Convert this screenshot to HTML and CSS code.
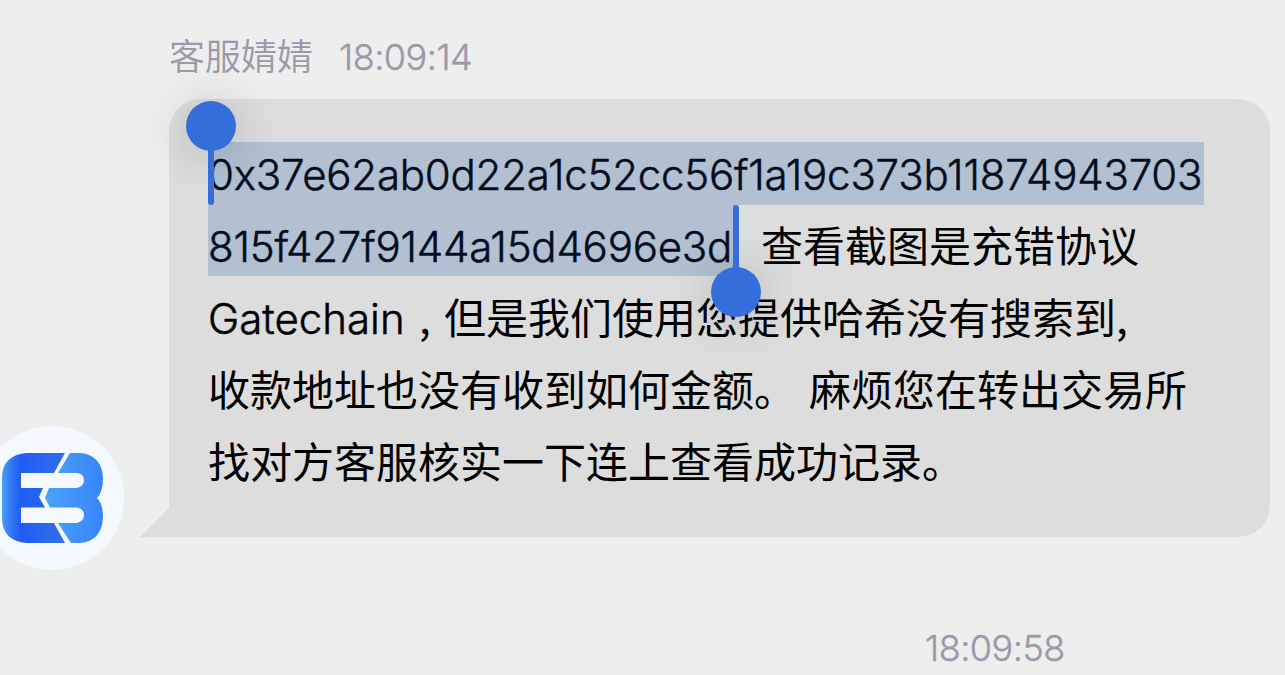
FILE: index.html
```html
<!DOCTYPE html>
<html lang="zh-CN">
  <head>
    <meta charset="utf-8">
    <title>客服婧婧</title>
    <link rel="stylesheet" href="styles.css">
  </head>
  <body>
    <div class="chat">
      <div class="message-header">
        <span class="name">客服婧婧</span>
        <span class="time">18:09:14</span>
      </div>
      <div class="message">
        <svg class="avatar" viewBox="0 426 124 144">
          <defs>
            <linearGradient id="left" x1="0" y1="0" x2="1" y2="0">
              <stop offset="0" stop-color="#4aa0fa"/>
              <stop offset="0.18" stop-color="#2b70f2"/>
              <stop offset="0.3" stop-color="#205cf4"/>
              <stop offset="1" stop-color="#316fe8"/>
            </linearGradient>
            <linearGradient id="right" x1="0" y1="0" x2="1" y2="0">
              <stop offset="0" stop-color="#4ba3f8"/>
              <stop offset="1" stop-color="#3784fa"/>
            </linearGradient>
          </defs>
          <circle cx="52" cy="498" r="72" fill="#f4f9ff"/>
          <path fill="url(#left)" d="M65 453 L54 473 H21 V488 H43 L39 497 L45 507.500 H21 V523 H54 L65 543 H27 Q2 541 2 518 V478 Q2 455 27 453 Z"/>
          <path fill="url(#right)" d="M70 453 H80 Q102 455 103 478 Q103 492 97 498 Q103 504 103 517 Q102 541 80 543 H71 L58 523 H77 Q84 521 84 515 Q84 509 77 507.500 H50 L45 498 L49 488 H77 Q84 486 84 480 Q84 474 77 473 H58 Z"/>
        </svg>
        <svg class="tail" viewBox="0 0 29 29">
          <path d="M29 0 L0 29 H29 Z" fill="#dddddd"/>
        </svg>
        <div class="bubble">
          <div class="line line-first"><span class="selected hash-start">0x37e62ab0d22a1c52cc56f1a19c373b11874943703</span></div>
          <div class="line line-second"><span class="selected hash-end">815f427f9144a15d4696e3d</span><span class="after-hash">查看截图是充错协议</span></div>
          <div class="line"><span class="latin">Gatechain</span><span class="comma">,</span><span class="cjk">但是我们使用您提供哈希没有搜索到,</span></div>
          <div class="line"><span>收款地址也没有收到如何金额。</span><span class="gap">麻烦您在转出交易所</span></div>
          <div class="line"><span>找对方客服核实一下连上查看成功记录。</span></div>
          <div class="handle handle-start"></div>
          <div class="handle handle-end"></div>
        </div>
      </div>
      <div class="next-time">18:09:58</div>
    </div>
  </body>
</html>
```
FILE: styles.css
```css
body {
  margin: 0;
  background-color: #eeeeee;
  color: #000;
  font-family: Inter, "Noto Sans CJK SC", sans-serif;
  font-weight: 400;
}
.chat {
  height: 675px;
  overflow: hidden;
}
.message-header {
  display: flex;
  box-sizing: border-box;
  height: 99px;
  padding: 32px 0 0 169px;
  gap: 26px;
  line-height: 50px;
  font-size: 36px;
  color: #9c98a8;
}
.name {
  line-height: 44px;
  font-family: "Noto Sans CJK SC", sans-serif;
  font-weight: 350;
}
.time,
.next-time {
  font-weight: 300;
  letter-spacing: -0.5px;
  -webkit-text-stroke: 0.4px #9c98a8;
}
.message {
  display: flex;
  align-items: flex-end;
  height: 438px;
}
.avatar {
  width: 124px;
  height: 144px;
  margin: 0 16px -33px 0;
}
.tail {
  width: 29px;
  height: 29px;
}
.bubble {
  position: relative;
  box-sizing: border-box;
  width: 1101px;
  height: 438px;
  padding: 43px 0 0 39px;
  border-radius: 32px 32px 32px 0;
  background-color: #dddddd;
}
.line {
  display: flex;
  height: 72px;
  line-height: 72px;
  font-size: 42px;
  white-space: nowrap;
}
.line-first {
  height: 63px;
  line-height: 66px;
}
.line-second {
  height: 71px;
  line-height: 84px;
  margin-bottom: 7px;
}
.selected {
  background-color: #b2c0d2;
  color: #020d20;
  font-weight: 300;
  letter-spacing: -0.22px;
  -webkit-text-stroke: 0.5px #020d20;
}
.hash-start {
  width: 996px;
}
.hash-end {
  width: 528px;
}
.after-hash {
  margin-left: 25px;
}
.latin {
  width: 211px;
  font-weight: 300;
  -webkit-text-stroke: 0.5px #000;
}
.comma,
.cjk {
  font-family: "Noto Sans CJK SC", sans-serif;
  /* same baseline as the Inter lines */
  line-height: 66px;
}
.comma {
  width: 25px;
}
.gap {
  margin-left: 13px;
}
/* selection grips */
.handle {
  position: absolute;
  width: 50px;
  height: 50px;
  border-radius: 50%;
  background-color: #356dda;
  box-shadow: 0 4px 48px rgba(0, 0, 0, 0.22);
}
.handle::after {
  content: "";
  position: absolute;
  left: 22px;
  width: 6px;
  height: 58px;
  border-radius: 3px;
  background-color: #356dda;
}
.handle-start {
  left: 17px;
  top: 2px;
}
.handle-start::after {
  top: 46px;
}
.handle-end {
  left: 542px;
  top: 168px;
}
.handle-end::after {
  bottom: 48px;
  height: 64px;
}
.next-time {
  padding: 86px 0 0 925px;
  line-height: 50px;
  font-size: 36px;
  color: #9c98a8;
}
```
